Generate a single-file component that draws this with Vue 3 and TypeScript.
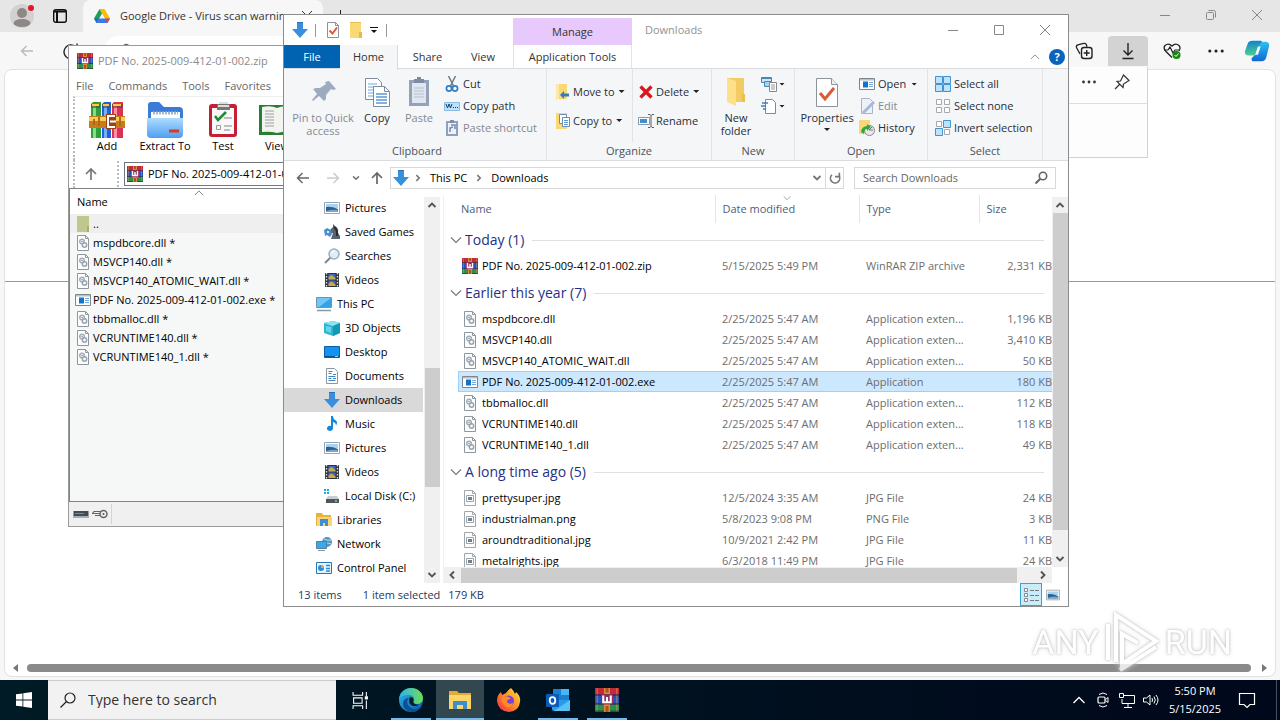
<script setup lang="ts">
import { ref } from 'vue'

interface TreeItem { label: string; icon: string; nested: boolean }
interface FileRow { name: string; date: string; type: string; size: string; icon: string }
interface FileGroup { title: string; rows: FileRow[] }

const dll = (name: string, size: string): FileRow => ({
  name, size, date: '2/25/2025 5:47 AM', type: 'Application exten...', icon: 'dll',
})

const groups: FileGroup[] = [
  {
    title: 'Today (1)',
    rows: [{ name: 'PDF No. 2025-009-412-01-002.zip', date: '5/15/2025 5:49 PM', type: 'WinRAR ZIP archive', size: '2,331 KB', icon: 'rar' }],
  },
  {
    title: 'Earlier this year (7)',
    rows: [
      dll('mspdbcore.dll', '1,196 KB'),
      dll('MSVCP140.dll', '3,410 KB'),
      dll('MSVCP140_ATOMIC_WAIT.dll', '50 KB'),
      { name: 'PDF No. 2025-009-412-01-002.exe', date: '2/25/2025 5:47 AM', type: 'Application', size: '180 KB', icon: 'exe' },
      dll('tbbmalloc.dll', '112 KB'),
      dll('VCRUNTIME140.dll', '118 KB'),
      dll('VCRUNTIME140_1.dll', '49 KB'),
    ],
  },
  {
    title: 'A long time ago (5)',
    rows: [
      { name: 'prettysuper.jpg', date: '12/5/2024 3:35 AM', type: 'JPG File', size: '24 KB', icon: 'image' },
      { name: 'industrialman.png', date: '5/8/2023 9:08 PM', type: 'PNG File', size: '3 KB', icon: 'image' },
      { name: 'aroundtraditional.jpg', date: '10/9/2021 2:42 PM', type: 'JPG File', size: '11 KB', icon: 'image' },
      { name: 'metalrights.jpg', date: '6/3/2018 11:49 PM', type: 'JPG File', size: '24 KB', icon: 'image' },
    ],
  },
]

const tree: TreeItem[] = [
  { label: 'Pictures', icon: 'pictures', nested: true },
  { label: 'Saved Games', icon: 'games', nested: true },
  { label: 'Searches', icon: 'searches', nested: true },
  { label: 'Videos', icon: 'videos', nested: true },
  { label: 'This PC', icon: 'pc', nested: false },
  { label: '3D Objects', icon: 'cube', nested: true },
  { label: 'Desktop', icon: 'desktop', nested: true },
  { label: 'Documents', icon: 'documents', nested: true },
  { label: 'Downloads', icon: 'down', nested: true },
  { label: 'Music', icon: 'music', nested: true },
  { label: 'Pictures', icon: 'pictures', nested: true },
  { label: 'Videos', icon: 'videos', nested: true },
  { label: 'Local Disk (C:)', icon: 'disk', nested: true },
  { label: 'Libraries', icon: 'libraries', nested: false },
  { label: 'Network', icon: 'network', nested: false },
  { label: 'Control Panel', icon: 'control', nested: false },
]

const archive = [
  { name: '..', icon: 'olive' },
  { name: 'mspdbcore.dll *', icon: 'dll' },
  { name: 'MSVCP140.dll *', icon: 'dll' },
  { name: 'MSVCP140_ATOMIC_WAIT.dll *', icon: 'dll' },
  { name: 'PDF No. 2025-009-412-01-002.exe *', icon: 'exe' },
  { name: 'tbbmalloc.dll *', icon: 'dll' },
  { name: 'VCRUNTIME140.dll *', icon: 'dll' },
  { name: 'VCRUNTIME140_1.dll *', icon: 'dll' },
]

const archiveTools = [
  { label: 'Add', icon: 'books' },
  { label: 'Extract To', icon: 'extract' },
  { label: 'Test', icon: 'test' },
  { label: 'View', icon: 'book' },
]

const selected = ref('PDF No. 2025-009-412-01-002.exe')
const place = ref(8)
</script>

<template>
  <div class="desktop">
    <svg class="sprite" aria-hidden="true">
      <linearGradient id="g-edge" x1="0" y1="0" x2="1" y2="1"><stop offset="0" stop-color="#2fb6e8" /><stop offset="1" stop-color="#0b55a8" /></linearGradient>
      <linearGradient id="g-edge2" x1="0" y1="0" x2="1" y2="0"><stop offset="0" stop-color="#2bb5ea" /><stop offset="1" stop-color="#6fdc55" /></linearGradient>
      <linearGradient id="g-fox" x1="1" y1="0" x2="0" y2="1"><stop offset="0" stop-color="#ffe14a" /><stop offset=".45" stop-color="#ff9422" /><stop offset="1" stop-color="#f5204e" /></linearGradient>
      <linearGradient id="g-cop1" x1="0" y1="0" x2="0" y2="1"><stop offset="0" stop-color="#1383cf" /><stop offset="1" stop-color="#4fd18b" /></linearGradient>
      <linearGradient id="g-cop2" x1="0" y1="0" x2="0" y2="1"><stop offset="0" stop-color="#2cc3ee" /><stop offset="1" stop-color="#1266d6" /></linearGradient>
      <linearGradient id="g-blue" x1="0" y1="0" x2="0" y2="1"><stop offset="0" stop-color="#aeddff" /><stop offset="1" stop-color="#4f9df0" /></linearGradient>
      <symbol id="i-down" viewBox="0 0 16 16"><path d="M5 0h6v7h5l-8 9-8-9h5z" fill="#3a8fdd" /><path d="M5 0h6v1H5z" fill="#2a70b5" /></symbol>
      <symbol id="i-rar" viewBox="0 0 16 16">
        <path d="M0 0h16v5H0z" fill="#c22a3c" /><path d="M0 5h16v6H0z" fill="#2f4fbd" /><path d="M0 11h16v5H0z" fill="#2f8f48" />
        <path d="M1 0h1v16H1zM14 0h1v16h-1z" fill="#d9b04a" opacity=".4" /><path d="M0 4.500h16M0 10.500h16M0 15.500h16" stroke="#1f2740" opacity=".6" />
        <path d="M6 0h4v16H6z" fill="#e08a34" /><path d="M7 0h2v3H7zM7 12h2v4H7z" fill="#a8541f" />
        <path d="M4 4h8v7H4z" fill="#8a2f5c" /><path d="M5.500 5v4.500h5V5M8 6v3" fill="none" stroke="#fff" stroke-width="1.400" />
      </symbol>
      <symbol id="i-books" viewBox="0 0 36 36">
        <path d="M2 2l2-2h8v36H2z" fill="#2e9e3e" /><path d="M13 2l2-2h7v36h-9z" fill="#2262d6" /><path d="M23 2l2-2h9v36H23z" fill="#dc3157" />
        <path d="M4 4h3v32H4z" fill="#86df7d" /><path d="M15 4h3v32h-3z" fill="#72b1ff" /><path d="M25 4h3v32h-3z" fill="#ff8fa4" />
        <path d="M2 2h9v4H2zM13 2h8v4h-8zM23 2h11v4H23z" fill="#5b4a36" opacity=".6" /><path d="M3 3h7M14 3h6M24 3h8" stroke="#ffc93d" stroke-width="2" />
        <path d="M0 14h36v12H0z" fill="#c97a1b" /><path d="M0 15h36v4H0z" fill="#f7cf57" /><path d="M5 17v6M10 15v9M31 15v9" stroke="#b06a14" stroke-width="2" />
        <path d="M17 12h10v15H17z" fill="#9d4213" /><path d="M26 14h-7v11h7M21 19.500h6" fill="none" stroke="#fff" stroke-width="2" />
      </symbol>
      <symbol id="i-extract" viewBox="0 0 36 36">
        <path d="M1 3q0-3 3-3h8l5 5h15q4 0 4 4v8H1z" fill="#3a7bd8" /><path d="M4 10h29v14H4z" fill="#fff" /><path d="M6 11h25" stroke="#9fb8d0" stroke-width="3" stroke-dasharray="2 1" />
        <path d="M0 16h36v16q0 4-4 4H4q-4 0-4-4z" fill="url(#g-blue)" /><path d="M22 29h10" stroke="#d93a20" stroke-width="3" />
      </symbol>
      <symbol id="i-test" viewBox="0 0 36 36">
        <rect x="4" y="2" width="28" height="33" rx="3" fill="#c61f35" /><path d="M7 6h22v26H7z" fill="#f8f8f8" /><path d="M12 2h13v6H12z" fill="#777" /><path d="M13 4h11M14 1h9" stroke="#ddd" stroke-width="2" />
        <path d="M10 14l3 4 8-8" fill="none" stroke="#1d8c35" stroke-width="2.500" /><path d="M19 16h8M19 24h8M19 28h6" stroke="#aaa" stroke-width="1.500" /><path d="M11.500 23.500h4v4h-4z" fill="none" stroke="#999" />
      </symbol>
      <symbol id="i-book" viewBox="0 0 36 36">
        <path d="M0 3h36v30H0z" fill="#277f36" /><path d="M3 5q9-2 15 1v25q-7-2-15-1zM33 5q-9-2-15 1v25q7-2 15-1z" fill="#f3f3ef" />
        <path d="M6 9h9M6 12h9M6 15h9M6 18h9M6 21h9M6 24h9" stroke="#9aa0a4" /><path d="M24 2h7v12l-3-3-4 3z" fill="#b31a34" />
      </symbol>
      <symbol id="i-dll" viewBox="0 0 16 16">
        <path d="M2.500 .5h8l3 3v12h-11z" fill="#fdfdfd" stroke="#8f979e" /><path d="M10.500 .5v3h3" fill="none" stroke="#8f979e" />
        <circle cx="7" cy="6.500" r="2.300" fill="none" stroke="#a3adb6" stroke-width="1.500" /><circle cx="9.500" cy="10" r="2.200" fill="none" stroke="#98a4ae" stroke-width="1.500" /><circle cx="7" cy="6.500" r=".7" fill="#6b7f92" />
      </symbol>
      <symbol id="i-exe" viewBox="0 0 16 16">
        <path d="M.5 2.500h15v11H.5z" fill="#fff" stroke="#7e868d" /><path d="M1 3h14v1.500H1z" fill="#b9c0c6" /><path d="M4 5.500h5v6H4z" fill="#1272cc" /><path d="M10 6.500h4M10 8.500h4M10 10.500h4" stroke="#6da8dc" />
      </symbol>
      <symbol id="i-image" viewBox="0 0 16 16">
        <path d="M2.500 .5h8l3 3v12h-11z" fill="#fdfdfd" stroke="#a0a7ad" /><path d="M10.500 .5v3h3" fill="none" stroke="#a0a7ad" /><path d="M4.500 5.500h7v6h-7z" fill="#fff" stroke="#9aa4ac" /><path d="M6 7h4v3H6z" fill="#70808c" />
      </symbol>
      <symbol id="i-olive" viewBox="0 0 16 16"><path d="M2 0h12v16H2z" fill="#bfc78d" /><path d="M12 10h2v6h-2z" fill="#a5ae6c" /></symbol>
      <symbol id="i-pictures" viewBox="0 0 16 16"><path d="M.5 2.500h15v11H.5z" fill="#fff" stroke="#9aa5af" /><path d="M2 4h12v4H2z" fill="#a8d4f4" /><path d="M2 7q5-1 12 2v3H2z" fill="#2f5f8e" /><path d="M2 11q6-2 12-1v2H2z" fill="#79a5c8" /></symbol>
      <symbol id="i-games" viewBox="0 0 16 16"><path d="M7 15h9v-3l-2-3q1-5-3-7L9 0v3L6 6l1 3h2z" fill="#58636d" /><path d="M10 3q4 3 3 9" stroke="#222a32" stroke-width="2" fill="none" /><path d="M0 6l3-2 4 2 1 4-2 3-3-2-2 1z" fill="#4b8fd0" /><path d="M3 7h2v2H3z" fill="#d8ecff" /></symbol>
      <symbol id="i-searches" viewBox="0 0 16 16"><path d="M6.500 9.500L1 15" stroke="#7c8790" stroke-width="2" /><circle cx="10" cy="6" r="5" fill="#dceefb" stroke="#9db0bf" stroke-width="1.500" /><path d="M7.500 5q1-2 3-2" stroke="#fff" fill="none" stroke-width="1.500" /></symbol>
      <symbol id="i-videos" viewBox="0 0 16 16"><path d="M1 1h14v14H1z" fill="#30333a" /><path d="M2.500 1v14M13.500 1v14" stroke="#ddd" stroke-width="1.400" stroke-dasharray="1.500 1.500" /><path d="M4.500 2h7v5.500h-7z" fill="#3b68c9" /><path d="M4.500 8.500h7V14h-7z" fill="#3b68c9" /><path d="M4.500 5l3-2 4 3v1.500h-7zM4.500 11.500l3-2 4 3V14h-7z" fill="#c9a94a" /></symbol>
      <symbol id="i-pc" viewBox="0 0 16 16"><path d="M.5 1.500h15v10H.5z" fill="#36a3e6" stroke="#7593a8" /><path d="M1 2h14L3 11H1z" fill="#70c7f6" /><path d="M1 14.500h14" stroke="#8d9aa5" stroke-width="1.500" /></symbol>
      <symbol id="i-cube" viewBox="0 0 16 16"><path d="M0 3l9-2 7 2v10l-7 3-9-3z" fill="#2fb5cf" /><path d="M0 3l9-2 7 2-7 3z" fill="#8ce6f2" /><path d="M9 6l7-3v10l-7 3z" fill="#1598b6" /><path d="M2 6l5 1v6l-5-2z" fill="#64d6e6" /></symbol>
      <symbol id="i-desktop" viewBox="0 0 16 16"><path d="M.5 2.500h15v11H.5z" fill="#1193ef" stroke="#0d5ea8" /><path d="M1 12.500h14" stroke="#0a4f93" /><path d="M11 12.500h3" stroke="#8fd0ff" /></symbol>
      <symbol id="i-documents" viewBox="0 0 16 16"><path d="M2.500 .5h8l3 3v12h-11z" fill="#fff" stroke="#8b98a4" /><path d="M4.500 3.500h4M4.500 5.500h3M9 6.500h3M4.500 8.500h7M4.500 10.500h3M9 10.500h3M4.500 12.500h7" stroke="#3d84c4" /></symbol>
      <symbol id="i-music" viewBox="0 0 16 16"><path d="M7 0h2q0 3 3 4.500 2 1.500 0 5 0-3-3-3.500V12.500a3 2.500 0 1 1-2-2.500z" fill="#1587d8" /></symbol>
      <symbol id="i-disk" viewBox="0 0 16 16"><path d="M0 1h2v2H0zM3 1h2v2H3zM0 4h2v2H0zM3 4h2v2H3z" fill="#18a7df" /><path d="M4 8h9l2 3H2z" fill="#c9cdd1" /><path d="M2 11h13v4H2z" fill="#50565d" /><path d="M11 13h2" stroke="#6be36b" stroke-width="1.500" /></symbol>
      <symbol id="i-libraries" viewBox="0 0 16 16"><path d="M0 1h6l1 2h8v11H0z" fill="#e9b23f" /><path d="M1 5h15v9H1z" fill="#f8d775" /><path d="M4 7h8v7h-3v-3H7v3H4z" fill="#3f8fd2" /></symbol>
      <symbol id="i-network" viewBox="0 0 16 16"><circle cx="11" cy="6" r="5" fill="#4e97c8" /><path d="M8 3q3 2 7 1M8 8q4-2 7 0" stroke="#b9def3" fill="none" /><path d="M.5 5.500h10v7H.5z" fill="#3ba8ea" stroke="#56809c" /><path d="M2 14.500h7" stroke="#8998a4" /></symbol>
      <symbol id="i-control" viewBox="0 0 16 16"><path d="M.5 2.500h15v11H.5z" fill="#e5f4ff" stroke="#2478b8" /><circle cx="5" cy="8" r="3" fill="#2b8bd6" /><path d="M5 8V5a3 3 0 0 1 3 3z" fill="#f2a33a" /><path d="M10 5.500h4M10 8.500h4M10 11h4" stroke="#2b8bd6" stroke-width="1.500" /></symbol>
      <symbol id="i-folder" viewBox="0 0 32 32"><path d="M7 2h17v24H7z" fill="#f2cb62" /><path d="M7 2l9 3v25l-9-4z" fill="#ffe08a" /><path d="M22 18h3v8h-3z" fill="#eabf4d" /></symbol>
      <symbol id="i-smallfolder" viewBox="0 0 16 16"><path d="M2 0h11v16H2z" fill="#fbd876" /><path d="M2 .5h11" stroke="#e8be50" /><path d="M11 10h3v6h-3z" fill="#e7bb4b" /></symbol>
      <symbol id="i-checksmall" viewBox="0 0 16 16"><path d="M2.500 .5h8l3 3v12h-11z" fill="#fff" stroke="#8c949b" /><path d="M10.500 .5v3h3" fill="none" stroke="#8c949b" /><path d="M4.500 8.500L7.500 11.500 12 5.500" fill="none" stroke="#dd5a36" stroke-width="2" /></symbol>
      <symbol id="i-check" viewBox="0 0 32 32"><path d="M5.500 2.500h15l6 6v22h-21z" fill="#fff" stroke="#8c949b" /><path d="M20.500 2.500v6h6" fill="#eee" stroke="#8c949b" /><path d="M9 17l5 6 9-11" fill="none" stroke="#dd5a36" stroke-width="3" /></symbol>
      <symbol id="i-pinbig" viewBox="0 0 32 32"><path d="M22 5l7 8-3 1-2-1-5 6v4l-2 2-5-5-6 5-1-1 5-6-4-5 3-1h4l6-4-1-2z" fill="#9dabc0" /></symbol>
      <symbol id="i-copybig" viewBox="0 0 32 32"><path d="M4.500 2.500h12l4 4v17h-16z" fill="#fff" stroke="#7d8b9a" /><path d="M7 8h9M7 11h10M7 14h10M7 17h8M7 20h8" stroke="#75a7da" /><path d="M12.500 10.500h11l5 5v15h-16z" fill="#fff" stroke="#7d8b9a" /><path d="M23.500 10.500v5h5" fill="none" stroke="#7d8b9a" /><path d="M15 18h11M15 21h11M15 24h11M15 27h11" stroke="#5b97d4" stroke-width="1.500" /></symbol>
      <symbol id="i-pastebig" viewBox="0 0 32 32"><path d="M6 4h20v26H6z" fill="#94a2b9" /><path d="M9 7h14v20H9z" fill="#dfe6f0" /><path d="M11 3h3V1h4v2h3v4H11z" fill="#7d8ba3" /><path d="M11 12h10M11 15h10M11 18h10M11 21h10" stroke="#b6c1d2" /></symbol>
      <symbol id="i-cut" viewBox="0 0 16 16"><path d="M4.500 0L10 11M11.500 0L6 11" stroke="#6f7b86" stroke-width="1.500" /><circle cx="5" cy="12.500" r="2.600" fill="none" stroke="#2f7fc7" stroke-width="1.700" /><circle cx="11" cy="12.500" r="2.600" fill="none" stroke="#2f7fc7" stroke-width="1.700" /></symbol>
      <symbol id="i-path" viewBox="0 0 16 16"><path d="M.5 4.500h15v8H.5z" fill="#bfe0fa" stroke="#89bce4" /><path d="M2 6l1.500 4L5 6l1.500 4L8 6" stroke="#17406b" fill="none" /><path d="M9 9.500h5" stroke="#17406b" stroke-dasharray="1 1" /></symbol>
      <symbol id="i-shortcut" viewBox="0 0 16 16"><path d="M2 1h12v15H2z" fill="#8fa0bd" /><path d="M4 3h8v11H4z" fill="#eef2f8" /><path d="M6 0h4v3H6z" fill="#7f8fab" /><path d="M6 12V8l3-1M7 5h4v4" stroke="#7089b5" fill="none" stroke-width="1.500" /></symbol>
      <symbol id="i-move" viewBox="0 0 16 16"><path d="M1 0h11v15H1z" fill="#fbd876" /><path d="M1 0h3v15l-3-1z" fill="#ffe9a8" /><path d="M5 11l4-4v2.500h5v3H9V15z" fill="#2f7ec4" /></symbol>
      <symbol id="i-copyto" viewBox="0 0 16 16"><path d="M1 0h11v16H1z" fill="#fbd876" /><path d="M4.500 1.500h7v9h-7z" fill="#fff" stroke="#6d8dae" /><path d="M7.500 4.500h7v9h-7z" fill="#fff" stroke="#6d8dae" /><path d="M9 7.500h4M9 9.500h4M9 11.500h4" stroke="#5f97cf" /></symbol>
      <symbol id="i-delete" viewBox="0 0 16 16"><path d="M2.500 2.500l11 11M13.500 2.500l-11 11" stroke="#d9161d" stroke-width="3.200" /></symbol>
      <symbol id="i-rename" viewBox="0 0 16 16"><path d="M.5 4.500h11v7H.5z" fill="#fff" stroke="#8699aa" /><path d="M2 6h7v4H2z" fill="#3f8fd2" /><path d="M10 1.500h2l1 1 1-1h2M13 2v12M10 14.500h2l1-1 1 1h2" stroke="#575f66" fill="none" /></symbol>
      <symbol id="i-newitem" viewBox="0 0 16 16"><path d="M.5 1.500h10v5H.5z" fill="#cfe6f8" stroke="#4a86b4" /><path d="M1 2.500h9" stroke="#4a86b4" /><path d="M3.500 5.500h7v5h-7z" fill="#a9d2ef" stroke="#4a86b4" /><path d="M8.500 6.500h7v9h-7z" fill="#fff" stroke="#888" /><path d="M10 9h4M10 11h4M10 13h4" stroke="#999" /></symbol>
      <symbol id="i-easy" viewBox="0 0 16 16"><path d="M4.500 1.500h7l3 3v11h-10z" fill="#fff" stroke="#7f8a94" /><path d="M1 5h6M0 8h5M2 11h3" stroke="#3c7fbd" stroke-width="1.500" /></symbol>
      <symbol id="i-edit" viewBox="0 0 16 16"><path d="M2.500 .5h8l3 3v12h-11z" fill="#eef2f8" stroke="#a9b5c7" /><path d="M4 15L15 4" stroke="#a8b9d8" stroke-width="3" /></symbol>
      <symbol id="i-history" viewBox="0 0 16 16"><path d="M0 0h11v14H0z" fill="#fbd876" /><circle cx="10.500" cy="10.500" r="5" fill="#e8e8e8" stroke="#888" /><path d="M10 10l3-3M10 10h4" stroke="#777" /><path d="M2 12a6 6 0 0 1 6-6V4l4 3-4 4V9q-3 0-3 5z" fill="#35a645" /></symbol>
      <symbol id="i-selall" viewBox="0 0 16 16"><path d="M.5 .5h7v7h-7zM8.500 .5h7v7h-7zM.5 8.500h7v7h-7zM8.500 8.500h7v7h-7z" fill="#bfe1fb" stroke="#3f93d2" /></symbol>
      <symbol id="i-selnone" viewBox="0 0 16 16"><path d="M1.500 1.500h5v5h-5zM9.500 1.500h5v5h-5zM1.500 9.500h5v5h-5zM9.500 9.500h5v5h-5z" fill="#fff" stroke="#a4a9ae" /></symbol>
      <symbol id="i-selinv" viewBox="0 0 16 16"><path d="M1.500 1.500h5v5h-5zM9.500 9.500h5v5h-5z" fill="#fff" stroke="#a4a9ae" /><path d="M8.500 .5h7v7h-7zM.5 8.500h7v7h-7z" fill="#bfe1fb" stroke="#3f93d2" /></symbol>
      <symbol id="i-up" viewBox="0 0 16 16"><path d="M8 14V3M3 8l5-5 5 5" fill="none" stroke="currentColor" stroke-width="1.700" /></symbol>
      <symbol id="i-back" viewBox="0 0 16 16"><path d="M14 8H3M7.500 3L2.500 8l5 5" fill="none" stroke="currentColor" stroke-width="1.500" /></symbol>
      <symbol id="i-forward" viewBox="0 0 16 16"><path d="M2 8h11M8.500 3l5 5-5 5" fill="none" stroke="currentColor" stroke-width="1.500" /></symbol>
      <symbol id="i-chev" viewBox="0 0 12 12"><path d="M2.500 4L6 7.500 9.500 4" fill="none" stroke="currentColor" stroke-width="1.900" /></symbol>
      <symbol id="i-thin" viewBox="0 0 12 12"><path d="M1 3.500l5 5 5-5" fill="none" stroke="currentColor" stroke-width="1.100" /></symbol>
      <symbol id="i-lens" viewBox="0 0 16 16"><circle cx="10" cy="6" r="3.700" fill="none" stroke="currentColor" stroke-width="1.600" /><path d="M7.300 8.700L2.500 13.500" stroke="currentColor" stroke-width="2" /></symbol>
      <symbol id="i-refresh" viewBox="0 0 16 16"><path d="M3.500 5.500a5.300 5.300 0 1 0 8-1" fill="none" stroke="currentColor" stroke-width="1.900" /><path d="M3 2v4.500h5" fill="none" stroke="currentColor" stroke-width="1.900" /></symbol>
      <symbol id="i-min" viewBox="0 0 12 12"><path d="M1 6.500h10" stroke="currentColor" /></symbol>
      <symbol id="i-max" viewBox="0 0 12 12"><path d="M1.500 1.500h9v9h-9z" fill="none" stroke="currentColor" /></symbol>
      <symbol id="i-restore" viewBox="0 0 12 12"><rect x="1.500" y="3.500" width="7" height="7" rx="1" fill="none" stroke="currentColor" /><path d="M3.500 1.500h5q2 0 2 2v5" fill="none" stroke="currentColor" /></symbol>
      <symbol id="i-close" viewBox="0 0 12 12"><path d="M1 1l10 10M11 1L1 11" stroke="currentColor" /></symbol>
      <symbol id="i-dots" viewBox="0 0 16 16"><circle cx="2.500" cy="8" r="1.400" fill="currentColor" /><circle cx="8" cy="8" r="1.400" fill="currentColor" /><circle cx="13.500" cy="8" r="1.400" fill="currentColor" /></symbol>
    </svg>

    <main class="browser">
      <header class="strip">
        <button class="profile" aria-label="Profile">
          <svg viewBox="0 0 24 24"><circle cx="12" cy="12" r="12" fill="#d4d0cf" /><circle cx="12" cy="9" r="5" fill="#8d8886" /><ellipse cx="12" cy="19" rx="8.500" ry="4" fill="#8d8886" /><circle cx="21" cy="4" r="3" fill="#e0182d" /></svg>
        </button>
        <button class="workspaces" aria-label="Tab actions">
          <svg viewBox="0 0 16 16"><rect x="1.700" y="1.700" width="12.600" height="12.600" rx="2" fill="none" stroke="#111" stroke-width="1.400" /><path d="M2 3.500h12M5 4v10" stroke="#111" stroke-width="2" /></svg>
        </button>
        <div class="tab">
          <svg class="drive" viewBox="0 0 16 16"><path d="M5.500 1h5L16 10.500h-5z" fill="#fbbc04" /><path d="M5.500 1L0 10.500 2.600 15 8 5.500z" fill="#1e9f55" /><path d="M5.300 10.500H16L13.400 15H2.600z" fill="#3b79f0" /><path d="M11 10.500h5L13.400 15z" fill="#ea4335" /><path d="M0 10.500h5.300L2.600 15z" fill="#2a63cf" /></svg>
          <span>Google Drive - Virus scan warning</span>
          <button aria-label="Close tab"><svg><use href="#i-close" /></svg></button>
        </div>
        <button class="newtab" aria-label="New tab"><svg viewBox="0 0 12 12"><path d="M6.500 0v12M0 6.500h12" stroke="#222" /></svg></button>
        <div class="winbtns">
          <button aria-label="Minimize browser"><svg><use href="#i-min" /></svg></button>
          <button aria-label="Restore browser"><svg><use href="#i-restore" /></svg></button>
          <button aria-label="Close browser"><svg><use href="#i-close" /></svg></button>
        </div>
      </header>
      <div class="toolbar">
        <button class="nav faint" aria-label="Back"><svg><use href="#i-back" /></svg></button>
        <button class="nav reload" aria-label="Reload"><svg viewBox="0 0 16 16"><path d="M13.500 4.500A7 7 0 1 0 15 8M14 .5v4.200H9.800" fill="none" stroke="#222" stroke-width="1.400" /></svg></button>
        <div class="omnibox"><svg viewBox="0 0 16 16"><path d="M5 7V4.500a3 3 0 0 1 6 0V7M3 7h10v7H3z" fill="none" stroke="#666" stroke-width="1.300" /></svg></div>
        <div class="actions">
          <button aria-label="Collections"><svg viewBox="0 0 18 18"><path d="M5 12L1.500 5.500q-.6-2 1.300-2.600l6-1.500q2-.4 2.600 1.300l.6 2" fill="none" stroke="#222" stroke-width="1.300" /><rect x="6.500" y="5.500" width="10.500" height="11" rx="2.500" fill="#f7f7f7" stroke="#222" stroke-width="1.400" /><path d="M11.700 8v6M8.700 11h6" stroke="#222" stroke-width="1.400" /></svg></button>
          <button class="pressed" aria-label="Downloads"><svg viewBox="0 0 18 18"><path d="M9 1v12M4.500 8.500L9 13l4.500-4.500M3.500 16.500h11" fill="none" stroke="#222" stroke-width="1.400" /></svg></button>
          <button aria-label="Browser essentials"><svg viewBox="0 0 18 18"><path d="M9 15.500L2.500 9Q0 6 2 3.500 5.500 .5 9 4q3.500-3.500 7-.5 2 2.500 0 5.500" fill="none" stroke="#222" stroke-width="1.300" /><path d="M1 8h4l2-3 3 6 2-3h4" fill="none" stroke="#222" stroke-width="1.200" /><circle cx="13.500" cy="13" r="4" fill="#128a12" /><path d="M11.500 13l1.500 1.500 2.500-3" stroke="#fff" fill="none" /></svg></button>
          <button aria-label="Settings and more"><svg><use href="#i-dots" /></svg></button>
          <button class="copilot" aria-label="Copilot"><svg viewBox="0 0 26 24"><path d="M8 1h9q2 0 2 3l-3 10q-1 3-4 3H3q-4-1-3-5l3-8q1-3 5-3z" fill="url(#g-cop1)" /><path d="M18 23H9q-2 0-2-3l3-3q2 0 3-3l3-9q1-3 4-3h3q4 1 3 5l-3 12q-1 4-5 4z" fill="url(#g-cop2)" /><path d="M11 16l3-9h3l-3 9z" fill="#f4fbff" /></svg></button>
        </div>
      </div>
      <div class="page">
        <hr>
        <div class="pagebar"><i class="tri left"></i><span></span><i class="tri right"></i></div>
      </div>
    </main>

    <section class="flyout" aria-label="Downloads flyout">
      <div class="flyhead">
        <button aria-label="More"><svg><use href="#i-dots" /></svg></button>
        <button aria-label="Pin"><svg viewBox="0 0 16 16"><path d="M9.500 1l5.500 5.500-1.500 1-4 2.500-.5 3.500L3 7.500 6.500 7l2-4zM5.500 10.500L1 15" fill="none" stroke="#333" stroke-width="1.200" /></svg></button>
      </div>
    </section>

    <section class="archive" aria-label="PDF No. 2025-009-412-01-002.zip">
      <header class="artitle"><svg><use href="#i-rar" /></svg><span>PDF No. 2025-009-412-01-002.zip</span></header>
      <nav class="armenu"><button>File</button><button>Commands</button><button>Tools</button><button>Favorites</button></nav>
      <div class="artools">
        <button v-for="t in archiveTools" :key="t.label"><svg><use :href="`#i-${t.icon}`" /></svg><span>{{ t.label }}</span></button>
      </div>
      <div class="arpath">
        <button aria-label="Up one level"><svg><use href="#i-up" /></svg></button>
        <div class="arbox"><svg><use href="#i-rar" /></svg><span>PDF No. 2025-009-412-01-002.zip</span></div>
      </div>
      <div class="arlist">
        <div class="arhead">Name<svg><use href="#i-thin" /></svg></div>
        <ul>
          <li v-for="f in archive" :key="f.name"><svg><use :href="`#i-${f.icon}`" /></svg>{{ f.name }}</li>
        </ul>
      </div>
      <footer class="arstatus">
        <svg viewBox="0 0 16 16"><path d="M.5 5h15v6H.5z" fill="#444c52" /><path d="M0 10h16v2H0z" fill="#a7aeb3" /><path d="M2 7.500h9" stroke="#7f8c94" /></svg>
        <svg viewBox="0 0 16 16"><circle cx="11.500" cy="8" r="3.500" fill="#eee" stroke="#666" stroke-width="1.500" /><circle cx="11.500" cy="8" r="1" fill="#555" /><path d="M8.500 5.500H2L.5 7.500H8M8 9.500H3" fill="none" stroke="#666" stroke-width="1.200" /></svg>
        <i></i>
      </footer>
    </section>

    <section class="explorer" aria-label="Downloads folder">
      <header class="titlebar">
        <div class="quick">
          <svg class="q16"><use href="#i-down" /></svg><i></i>
          <button aria-label="Properties"><svg><use href="#i-checksmall" /></svg></button>
          <button aria-label="New folder"><svg><use href="#i-smallfolder" /></svg></button>
          <button class="caretbtn" aria-label="Customize toolbar"><svg viewBox="0 0 8 8"><path d="M0 1.500h8" stroke="#111" /><path d="M1 4h6L4 7z" fill="#111" /></svg></button><i></i>
        </div>
        <div class="manage">Manage</div>
        <h1>Downloads</h1>
        <div class="winbtns">
          <button aria-label="Minimize"><svg><use href="#i-min" /></svg></button>
          <button aria-label="Maximize"><svg><use href="#i-max" /></svg></button>
          <button aria-label="Close"><svg><use href="#i-close" /></svg></button>
        </div>
      </header>
      <nav class="tabs">
        <button class="file">File</button>
        <button class="home">Home</button>
        <button class="share">Share</button>
        <button class="view">View</button>
        <button class="apptools">Application Tools</button>
        <span class="grow"></span>
        <button class="fold" aria-label="Minimize the ribbon"><svg><use href="#i-thin" /></svg></button>
        <button class="help" aria-label="Help">?</button>
      </nav>

      <div class="ribbon">
        <div class="group clipboard">
          <div class="cells">
            <button class="big off pinbtn"><svg><use href="#i-pinbig" /></svg>Pin to Quick access</button>
            <button class="big copybtn"><svg><use href="#i-copybig" /></svg>Copy</button>
            <button class="big off pastebtn"><svg><use href="#i-pastebig" /></svg>Paste</button>
            <div class="stack">
              <button><svg><use href="#i-cut" /></svg>Cut</button>
              <button><svg><use href="#i-path" /></svg>Copy path</button>
              <button class="off"><svg><use href="#i-shortcut" /></svg>Paste shortcut</button>
            </div>
          </div>
          <h2>Clipboard</h2>
        </div>
        <div class="group organize">
          <div class="cells">
            <div class="stack two first">
              <button><svg><use href="#i-move" /></svg>Move to<i class="caret"></i></button>
              <button><svg><use href="#i-copyto" /></svg>Copy to<i class="caret"></i></button>
            </div>
            <div class="stack two second">
              <button><svg><use href="#i-delete" /></svg>Delete<i class="caret"></i></button>
              <button><svg><use href="#i-rename" /></svg>Rename</button>
            </div>
          </div>
          <h2>Organize</h2>
        </div>
        <div class="group new">
          <div class="cells">
            <button class="big folderbtn"><svg><use href="#i-folder" /></svg>New folder</button>
            <div class="stack icons">
              <button aria-label="New item"><svg><use href="#i-newitem" /></svg><i class="caret"></i></button>
              <button aria-label="Easy access"><svg><use href="#i-easy" /></svg><i class="caret"></i></button>
            </div>
          </div>
          <h2>New</h2>
        </div>
        <div class="group open">
          <div class="cells">
            <button class="big propbtn"><svg><use href="#i-check" /></svg>Properties<i class="caret"></i></button>
            <div class="stack">
              <button><svg><use href="#i-exe" /></svg>Open<i class="caret"></i></button>
              <button class="off"><svg><use href="#i-edit" /></svg>Edit</button>
              <button><svg><use href="#i-history" /></svg>History</button>
            </div>
          </div>
          <h2>Open</h2>
        </div>
        <div class="group select">
          <div class="cells">
            <div class="stack">
              <button><svg><use href="#i-selall" /></svg>Select all</button>
              <button><svg><use href="#i-selnone" /></svg>Select none</button>
              <button><svg><use href="#i-selinv" /></svg>Invert selection</button>
            </div>
          </div>
          <h2>Select</h2>
        </div>
      </div>

      <div class="location">
        <button class="arrow" aria-label="Back"><svg><use href="#i-back" /></svg></button>
        <button class="arrow faint" aria-label="Forward"><svg><use href="#i-forward" /></svg></button>
        <button class="recent" aria-label="Recent locations"><svg><use href="#i-chev" /></svg></button>
        <button class="arrow upbtn" aria-label="Up"><svg><use href="#i-up" /></svg></button>
        <div class="crumbs">
          <svg class="q16"><use href="#i-down" /></svg>
          <svg class="sep"><use href="#i-chev" /></svg><a href="#pc">This PC</a>
          <svg class="sep"><use href="#i-chev" /></svg><a href="#downloads">Downloads</a>
          <span class="grow"></span>
          <button class="drop" aria-label="Previous locations"><svg><use href="#i-chev" /></svg></button>
          <button class="refresh" aria-label="Refresh"><svg class="mirror"><use href="#i-refresh" /></svg></button>
        </div>
        <label class="search"><input type="text" aria-label="Search Downloads" placeholder="Search Downloads"><svg><use href="#i-lens" /></svg></label>
      </div>

      <div class="body">
        <nav class="tree" aria-label="Folders">
          <button v-for="(t, i) in tree" :key="i" :class="{ nested: t.nested, current: place === i }" @click="place = i">
            <svg><use :href="`#i-${t.icon}`" /></svg>{{ t.label }}
          </button>
        </nav>
        <div class="vbar treebar"><svg class="flip"><use href="#i-chev" /></svg><span></span><svg><use href="#i-chev" /></svg></div>
        <div class="files">
          <div class="tablewrap">
            <table>
              <colgroup><col class="c-gutter"><col class="c-name"><col class="c-date"><col class="c-type"><col></colgroup>
              <thead>
                <tr><td></td><th scope="col">Name</th><th scope="col">Date modified<svg><use href="#i-thin" /></svg></th><th scope="col">Type</th><th scope="col">Size</th></tr>
              </thead>
              <tbody v-for="g in groups" :key="g.title">
                <tr class="grouprow"><th colspan="5" scope="rowgroup"><button><svg><use href="#i-thin" /></svg>{{ g.title }}<i></i></button></th></tr>
                <tr v-for="f in g.rows" :key="f.name" :class="{ picked: selected === f.name }" @click="selected = f.name">
                  <td class="gutter"></td>
                  <td class="name"><div><svg><use :href="`#i-${f.icon}`" /></svg>{{ f.name }}</div></td>
                  <td>{{ f.date }}</td>
                  <td>{{ f.type }}</td>
                  <td class="size">{{ f.size }}</td>
                </tr>
              </tbody>
            </table>
          </div>
          <div class="hbar"><svg class="cw"><use href="#i-chev" /></svg><span></span><svg class="ccw"><use href="#i-chev" /></svg></div>
        </div>
        <div class="vbar filebar"><svg class="flip"><use href="#i-chev" /></svg><span></span><svg><use href="#i-chev" /></svg></div>
      </div>

      <footer class="status">
        <span>13 items</span><span>1 item selected</span><span>179 KB</span>
        <span class="grow"></span>
        <button class="on" aria-label="Details view"><svg viewBox="0 0 16 16"><path d="M1.500 1.500h3v3h-3zM1.500 6.500h3v3h-3zM1.500 11.500h3v3h-3z" fill="#fff" stroke="#888" /><path d="M7 3.500h4M12 3.500h4M7 8.500h4M12 8.500h4M7 13.500h4M12 13.500h4" stroke="#777" /></svg></button>
        <button aria-label="Large icons view"><svg><use href="#i-pictures" /></svg></button>
      </footer>
    </section>

    <div class="watermark" aria-hidden="true">
      <span>ANY</span>
      <svg viewBox="0 0 56 64"><path d="M12 52V5l40 26-34 23V24l16 9M4 50V14M16 60l36-23" fill="none" stroke="#fff" stroke-width="4" /></svg>
      <span>RUN</span>
    </div>

    <footer class="taskbar">
      <button class="start" aria-label="Start"><svg viewBox="0 0 16 16"><path d="M0 2.300L6.500 1.400v6.200H0zM7.300 1.300L16 0v7.600H7.300zM0 8.400h6.500v6.200L0 13.700zM7.300 8.400H16V16l-8.700-1.300z" fill="#fff" /></svg></button>
      <label class="tasksearch"><svg viewBox="0 0 16 16"><circle cx="10" cy="6" r="5" fill="none" stroke="#222" stroke-width="1.200" /><path d="M6.500 9.500L.5 15.500" stroke="#222" stroke-width="1.300" /></svg><input type="text" aria-label="Type here to search" placeholder="Type here to search"></label>
      <button class="app view" aria-label="Task view"><svg class="s16" viewBox="0 0 16 16"><path d="M1 0v3h9V0M1.500 5.500h8v5h-8zM1 16v-3h9v3M13.500 0v4M13.500 8v8" fill="none" stroke="#fff" /><path d="M12 4h3v3h-3z" fill="#fff" /></svg></button>
      <button class="app run" aria-label="Edge"><svg viewBox="0 0 24 24"><circle cx="12" cy="12" r="12" fill="url(#g-edge)" /><path d="M0 11C1 4 6 0 12 0c7 0 12 5 12 10 0 4-3 6-6 6-3 0-4-1-3-3 1-3-1-6-5-6-5 0-9 2-10 4z" fill="url(#g-edge2)" /><path d="M10 10q-3 3-1 7 3 5 9 4l4-2q-3 5-9 5-9-1-9-9 1-5 6-5z" fill="#0d4f96" /><path d="M10.500 9.500q4-1 4 2.500-1 2 .5 3.500 2 1.500 5 1-3 2.500-7 1-4-2-2.500-8z" fill="#02202c" /></svg></button>
      <button class="app run active" aria-label="File Explorer"><svg viewBox="0 0 24 24"><path d="M1 3h8l2 2h12v16H1z" fill="#e5a832" /><path d="M1 7h22v14H1z" fill="#fbd567" /><path d="M5 13h14v8h-4v-4H9v4H5z" fill="#3d8fcb" /></svg></button>
      <button class="app" aria-label="Firefox"><svg viewBox="0 0 24 24"><path d="M14 0q3 3 4 6l1-2q5 4 4 10-1 9-11 10Q1 23 0 13q0-6 4-9l1 3 4-2q2-3 5-5z" fill="url(#g-fox)" /><circle cx="11.500" cy="13" r="5.500" fill="#7541d6" /><path d="M5 10q3-3 7-1l2 2q-4 0-4 3 2 3 6 1-1 5-6 4-6-2-5-9z" fill="#ff8a2a" /></svg></button>
      <button class="app run" aria-label="Outlook"><svg viewBox="0 0 24 24"><path d="M7 1h16v13H7z" fill="#1b7fd4" /><path d="M15 1h8v6h-8z" fill="#49b6f0" /><path d="M6 12h18v11H8q-2 0-2-2z" fill="#2b9be6" /><path d="M24 12L8 23h14q2 0 2-2z" fill="#54c4f6" /><rect y="6" width="13" height="13" rx="1" fill="#0a5cb8" /><ellipse cx="6.500" cy="12.500" rx="2.800" ry="3.300" fill="none" stroke="#fff" stroke-width="1.800" /></svg></button>
      <button class="app run" aria-label="WinRAR"><svg><use href="#i-rar" /></svg></button>
      <span class="grow"></span>
      <button class="tray" aria-label="Hidden icons"><svg viewBox="0 0 16 16"><path d="M2.500 11L8 5.500l5.500 5.500" fill="none" stroke="#fff" stroke-width="1.300" /></svg></button>
      <button class="tray" aria-label="Meet now"><svg viewBox="0 0 16 16"><rect x="3" y="5" width="7" height="6" rx="1" fill="none" stroke="#fff" stroke-width="1.200" /><path d="M10.500 7.500l2.500-2v5l-2.500-2M4 2.500q4-3 8 0M4 13.500q4 3 8 0" fill="none" stroke="#fff" /></svg></button>
      <button class="tray" aria-label="Network"><svg viewBox="0 0 16 16"><path d="M5 3.500h10.500v8H3V7M9 12v3M5 15.500h8" fill="none" stroke="#fff" /><path d="M.5 1.500h4v4h-4z" fill="none" stroke="#fff" /></svg></button>
      <button class="tray" aria-label="Volume"><svg viewBox="0 0 16 16"><path d="M.5 6h3l3.500-3v10L3.500 10H.5z" fill="none" stroke="#fff" /><path d="M9 6q1 2 0 4M11 4.500q2.500 3.500 0 7M13 3q4 5 0 10" fill="none" stroke="#fff" /></svg></button>
      <div class="clock"><span>5:50 PM</span><span>5/15/2025</span></div>
      <button class="notify" aria-label="Notifications"><svg viewBox="0 0 18 18"><path d="M1.500 2.500h15v11H12l-3 3-3-3H1.500z" fill="none" stroke="#fff" stroke-width="1.200" /></svg></button>
      <button class="peek" aria-label="Show desktop"></button>
    </footer>
  </div>
</template>

<style>
body { margin: 0; }
</style>

<style scoped>
.desktop {
  position: relative;
  display: flex;
  flex-direction: column;
  height: 100vh;
  overflow: hidden;
  font: 11px/16px "Open Sans", "Noto Sans", sans-serif;
  color: #000;
  background: #f7f7f7;
}
.desktop * { box-sizing: border-box; }
.sprite { position: absolute; width: 0; height: 0; }
button { display: flex; align-items: center; padding: 0; border: 0; background: none; color: inherit; font: inherit; white-space: nowrap; }
input { min-width: 0; border: 0; padding: 0; background: none; font: inherit; color: inherit; outline: 0; }
svg { flex: none; width: 16px; height: 16px; }
h1, h2 { margin: 0; font: inherit; }
a { color: inherit; text-decoration: none; }
ul { margin: 0; padding: 0; list-style: none; }
.grow { flex: 1; }
.winbtns { display: flex; height: 30px; margin-left: auto; color: #888; }
.winbtns button { width: 46px; justify-content: center; }
.winbtns svg { width: 12px; height: 12px; }

/* Browser */
.browser { flex: 1; display: flex; flex-direction: column; min-height: 0; }
.strip { display: flex; height: 32px; background: #e6e6e6; }
.profile { width: 46px; padding-left: 10px; }
.profile svg { width: 24px; height: 24px; }
.workspaces { width: 37px; padding-left: 6px; }
.tab { display: flex; align-items: center; width: 240px; padding-left: 11px; background: #f7f7f7; border-radius: 8px 8px 0 0; color: #333; }
.tab span { width: 180px; margin-left: 10px; overflow: hidden; white-space: nowrap; }
.tab button { margin-left: 1px; }
.tab button svg, .newtab svg { width: 12px; height: 12px; }
.newtab { margin-left: 11px; }
.toolbar { display: flex; align-items: center; height: 37px; background: #f7f7f7; }
.nav { width: 44px; padding-left: 19px; color: #222; }
.nav.faint { color: #bbb; }
.reload { width: 60px; }
.omnibox { display: flex; align-items: center; flex: 1; height: 30px; padding-left: 14px; border-radius: 15px; background: #fff; }
.actions { display: flex; height: 30px; color: #222; }
.actions button { width: 40px; justify-content: center; margin-right: 4px; }
.actions button svg { width: 18px; height: 18px; }
.actions .pressed { background: #d3d3d3; border-radius: 4px 4px 0 0; }
.actions .copilot { width: 34px; margin-right: 6px; }
.actions .copilot svg { width: 24px; height: 24px; }
.page { flex: 1; display: flex; flex-direction: column; margin: 0 4px 3px; border: 1px solid #e2e2e2; border-radius: 8px; background: #fff; }
.page hr { width: 100%; height: 1px; margin: 211px 0 auto; border: 0; background: #999; }
.pagebar { display: flex; align-items: center; gap: 9px; height: 16px; padding: 0 8px; }
.pagebar span { flex: 1; height: 8px; margin-right: 2px; border-radius: 4px; background: #8a8a8a; }
.tri { border: 4px solid transparent; border-left-width: 5px; border-right-width: 5px; }
.tri.left { border-left-width: 0; border-right-color: #777; }
.tri.right { border-right-width: 0; border-left-color: #777; }

.flyout { position: absolute; top: 67px; right: 132px; width: 300px; height: 91px; background: #fdfdfd; border: 1px solid #d2d2d2; border-top: 0; }
.flyhead { display: flex; justify-content: flex-end; gap: 17px; height: 37px; padding: 0 17px 6px; border-bottom: 1px solid #ddd; color: #333; }

/* Archive window */
.archive { position: absolute; top: 45px; left: 68px; display: flex; flex-direction: column; width: 420px; height: 482px; border: 1px solid #9a9a9a; background: #fff; }
.artitle { display: flex; align-items: center; gap: 5px; height: 30px; padding-left: 8px; color: #8a8a8a; }
.armenu { display: flex; gap: 15px; height: 20px; padding-left: 7px; color: #666; }
.artools { display: flex; height: 64px; margin-left: 4px; padding: 5px 0 0 3px; border-left: 2px dotted #bbb; border-top: 1px solid #eee; }
.artools button { flex-direction: column; width: 58px; }
.artools button:last-child { width: 50px; }
.artools svg { width: 36px; height: 36px; }
.arpath { display: flex; align-items: center; height: 28px; margin-left: 4px; border-left: 2px dotted #bbb; }
.arpath button { width: 44px; height: 26px; padding-left: 8px; border-right: 2px dotted #bbb; color: #777; }
.arbox { display: flex; align-items: center; gap: 5px; flex: 1; height: 24px; margin-left: 5px; padding-left: 2px; border: 1px solid #6d7680; background: #fff; }
.arlist { flex: 1; border: 1px solid #7d8287; border-right: 0; background: #f6f7f7; }
.arhead { position: relative; height: 25px; padding: 5px 0 0 7px; background: #fff; }
.arhead svg { position: absolute; left: 124px; top: -1px; width: 10px; height: 10px; color: #777; transform: scaleY(-1); }
.arlist li { display: flex; align-items: center; gap: 2px; height: 19px; padding-left: 5px; }
.arlist li:first-child { background: #efefef; }
.arstatus { display: flex; align-items: center; gap: 3px; width: 100%; height: 24px; padding-left: 4px; background: #f0f0f0; }
.arstatus i { width: 1px; height: 20px; background: #d5d5d5; }

/* Explorer window */
.explorer { position: absolute; top: 14px; right: 211px; bottom: 113px; left: 283px; display: flex; flex-direction: column; border: 1px solid #8c8c8c; background: #fff; }
.titlebar { display: flex; height: 30px; }
.quick { display: flex; align-items: center; width: 229px; padding-left: 8px; }
.quick i { width: 1px; height: 13px; margin-left: 7px; background: #999; }
.quick button { margin-left: 7px; }
.quick i + button { margin-left: 9px; }
.quick .caretbtn { margin-left: 6px; }
.quick .caretbtn svg { width: 8px; height: 8px; }
.quick .caretbtn + i { margin-left: 8px; }
.manage { width: 119px; margin-top: 3px; padding-top: 6px; text-align: center; background: #e8c9fb; color: #333; }
h1 { margin-left: 13px; padding-top: 7px; color: #929292; }
.tabs { display: flex; align-items: stretch; height: 23px; color: #333; }
.tabs button { justify-content: center; }
.tabs .file { width: 56px; background: #0063b1; color: #fff; }
.tabs .home { width: 58px; height: 25px; padding-bottom: 2px; border-right: 1px solid #dadbdc; background: #f5f6f8; z-index: 1; }
.tabs .share { width: 59px; }
.tabs .view { width: 52px; }
.tabs .apptools { width: 119px; margin-left: 4px; border: solid #e6e0ea; border-width: 0 1px; }
.tabs .fold { width: 16px; color: #888; }
.fold svg { width: 10px; height: 10px; transform: scaleY(-1); }
.tabs .help { align-self: center; width: 16px; height: 16px; margin: 0 3px 0 6px; border-radius: 50%; background: #0a63bd; color: #fff; font-weight: 700; }
.ribbon { display: flex; height: 93px; border: solid #dadcde; border-width: 1px 0; background: #f5f6f8; color: #26303a; }
.group { display: flex; flex-direction: column; border-right: 1px solid #e2e3e4; }
.cells { display: flex; height: 73px; }
.group h2 { height: 18px; line-height: 18px; text-align: center; color: #4a525c; }
.clipboard { width: 263px; padding-left: 4px; }
.organize { width: 165px; }
.new { width: 83px; }
.open { width: 133px; }
.select { width: 115px; }
.big { flex-direction: column; align-items: center; padding-top: 7px; line-height: 13px; white-space: normal; text-align: center; }
.big svg { width: 32px; height: 32px; margin-bottom: 3px; }
.off { color: #848a92; }
.pinbtn { width: 70px; }
.copybtn { width: 38px; }
.pastebtn { width: 46px; }
.stack { display: flex; flex-direction: column; padding: 4px 0 0 2px; }
.stack button { gap: 3px; height: 22px; }
.caret { width: 6px; height: 3px; margin-left: 2px; background: #222; clip-path: polygon(0 0, 100% 0, 50% 100%); }
.big .caret { margin: 4px 0 0; }
.stack.two { padding-top: 8px; }
.stack.two button { height: 29px; gap: 2px; }
.stack.two.first { width: 86px; padding-left: 8px; border-right: 1px solid #e2e3e4; }
.stack.two.second { padding-left: 5px; }
.folderbtn { width: 40px; margin-left: 4px; }
.icons { padding-left: 5px; }
.stack.icons button { gap: 0; }
.propbtn { width: 60px; margin-left: 2px; }
.select .cells { padding-left: 5px; }

.location { display: flex; align-items: center; height: 34px; padding: 0 12px 0 11px; }
.arrow { width: 30px; color: #666; }
.arrow.faint { width: 32px; color: #ccc; }
.recent { width: 12px; color: #777; }
.recent svg { width: 10px; height: 10px; margin-left: -6px; }
.upbtn { width: 21px; }
.crumbs { display: flex; align-items: center; flex: 1; height: 22px; padding-left: 2px; border: 1px solid #d9d9d9; }
.crumbs .sep { width: 10px; height: 10px; margin: 0 7px 0 4px; color: #777; transform: rotate(-90deg); }
.crumbs a + .sep { margin-left: 7px; }
.drop { width: 17px; height: 20px; justify-content: center; color: #777; }
.drop svg { width: 12px; height: 12px; }
.refresh { width: 18px; height: 20px; justify-content: center; border-left: 1px solid #d9d9d9; color: #777; }
.refresh svg { width: 14px; height: 14px; }
.mirror { transform: scaleX(-1); }
.search { display: flex; align-items: center; width: 202px; height: 22px; margin-left: 10px; padding: 0 6px 0 8px; border: 1px solid #d9d9d9; color: #666; }
.search input { flex: 1; }
input::placeholder { color: #666; opacity: 1; }

.body { flex: 1; display: flex; min-height: 0; }
.tree { width: 139px; padding-top: 1px; overflow: hidden; }
.tree button { gap: 5px; width: 100%; height: 24px; padding-left: 32px; }
.tree .nested { padding-left: 40px; }
.tree .current { background: #d9d9d9; }
.vbar { display: flex; flex-direction: column; align-items: center; width: 16px; background: #f0f0f0; color: #555; padding: 2px 0; }
.vbar svg, .hbar svg { width: 12px; height: 12px; }
.vbar span { flex: 1; width: 15px; background: #cdcdcd; }
.flip { transform: scaleY(-1); }
.treebar { margin: 2px 0 0 1px; }
.treebar span { margin: 157px 0 82px; }
.files { flex: 1; display: flex; flex-direction: column; min-width: 0; margin-left: 3px; border-left: 1px solid #f0f0f0; }
.tablewrap { flex: 1; overflow: hidden; min-height: 0; }
table { width: 100%; table-layout: fixed; border-collapse: collapse; color: #6d6d6d; }
.c-gutter { width: 14px; }
.c-name { width: 257px; }
.c-date { width: 144px; }
.c-type { width: 120px; }
td, th { height: 21px; padding: 0 0 0 7px; font-weight: 400; text-align: left; white-space: nowrap; }
thead th { position: relative; height: 28px; color: #4c607a; border-right: 1px solid #e5e5e5; }
thead th:nth-child(2) { padding-left: 3px; }
thead th:last-child { border-right: 0; }
thead svg { position: absolute; left: 66px; top: -1px; width: 10px; height: 8px; color: #888; }
.gutter { padding: 0; }
.grouprow th { height: 32px; padding: 2px 8px 0 6px; }
.grouprow button { width: 100%; font-size: 14px; line-height: 20px; color: #1e3287; }
.grouprow svg { width: 12px; height: 12px; margin-right: 3px; color: #777; }
.grouprow i { flex: 1; height: 1px; margin-left: 8px; background: #e0e0e0; }
td.name { padding-left: 4px; color: #000; }
.name div { display: flex; align-items: center; gap: 4px; }
.size { padding: 0; text-align: right; }
.picked td:not(.gutter) { background: #cce8ff; box-shadow: inset 0 1px #99d1ff, inset 0 -1px #99d1ff; }
.picked td.name { box-shadow: inset 1px 1px #99d1ff, inset 0 -1px #99d1ff; }
.hbar { display: flex; align-items: center; height: 16px; padding: 0 3px 0 2px; background: #f0f0f0; color: #555; }
.hbar span { flex: 1; height: 15px; margin: 0 20px 0 3px; background: #cdcdcd; }
.cw { transform: rotate(90deg); }
.ccw { transform: rotate(-90deg); }
.filebar { margin: 2px 0 16px; }
.filebar span { margin: 2px 0 23px; }
.status { display: flex; align-items: center; gap: 21px; height: 23px; padding: 0 7px 0 14px; color: #1e395b; }
.status span:nth-child(3) { margin-left: -13px; }
.status button { width: 22px; height: 23px; justify-content: center; }
.status button + button { width: 16px; margin-left: -18px; }
.status button + button svg { width: 14px; height: 14px; }
.status .on { border: 1px solid #3fa0cf; background: #c9ecfb; }

.watermark { position: absolute; right: 48px; bottom: 46px; display: flex; align-items: center; gap: 5px; font: 34px/64px "Roboto", "Open Sans", sans-serif; color: #fff; filter: drop-shadow(0 0 1px #aaa) drop-shadow(0 0 2px #ddd); opacity: .8; }
.watermark svg { width: 56px; height: 64px; }

/* Taskbar */
.taskbar { position: relative; display: flex; height: 40px; background: linear-gradient(90deg, #001b25, #00081b); color: #fff; }
.taskbar button { justify-content: center; }
.start { width: 48px; }
.tasksearch { display: flex; align-items: center; gap: 12px; width: 288px; padding-left: 12px; border: 1px solid #ccc; border-width: 1px 0; background: #f2f2f2; color: #333; font-size: 14px; }
.tasksearch input { flex: 1; }
.tasksearch input::placeholder { color: #333; }
.app { width: 48px; margin-right: 1px; }
.app.view { width: 50px; padding-right: 2px; }
.app svg { width: 24px; height: 24px; }
.app .s16 { width: 17px; height: 17px; }
.run { background: linear-gradient(#76b9ed, #76b9ed) center bottom / 40px 2px no-repeat; }
.run.active { background-size: 48px 2px; background-color: #33474f; }
.tray { width: 24px; }
.clock { display: flex; flex-direction: column; justify-content: center; width: 64px; line-height: 18px; text-align: center; }
.notify { width: 40px; margin-right: 9px; }
.notify svg { width: 18px; height: 18px; }
.peek { width: 4px; border-left: 1px solid #46505f; }
</style>
